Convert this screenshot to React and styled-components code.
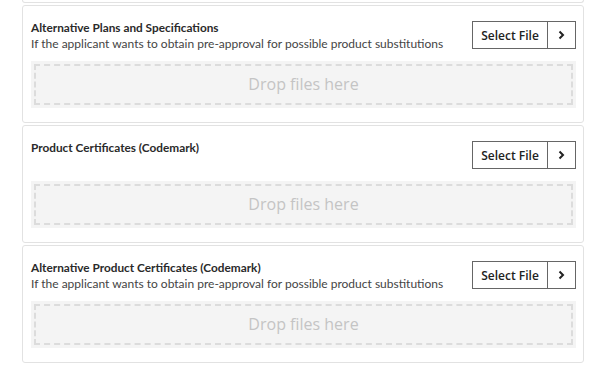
import React from 'react'
import styled, { createGlobalStyle } from 'styled-components'

const GlobalStyle = createGlobalStyle`
  body {
    margin: 0;
    background: #fff;
    font-family: 'Lato', 'Open Sans', sans-serif;
  }
`

const Page = styled.div`
  width: 562px;
  padding-left: 22px;
  display: flex;
  flex-direction: column;
  gap: 2px;
`

const CardStub = styled.div`
  height: 2px;
  border: 1px solid #e2e2e2;
  border-top: none;
  border-radius: 0 0 3px 3px;
`

const Card = styled.div`
  background: #fff;
  border: 1px solid #e2e2e2;
  border-radius: 3px;
  padding: 15px 7px 14px 8px;
  display: flex;
  flex-direction: column;
  gap: 12px;
`

const Header = styled.div`
  display: flex;
  justify-content: space-between;
  align-items: flex-start;
  height: 28px;
`

const Info = styled.div`
  display: flex;
  flex-direction: column;
  gap: 2px;
`

const Title = styled.div`
  font-size: 11.8px;
  font-weight: 700;
  color: #2a2a2a;
  line-height: 14px;
`

const Desc = styled.div`
  font-size: 12px;
  color: #444;
  line-height: 14px;
`

const ButtonGroup = styled.div`
  display: flex;
  height: 28px;
  border: 1px solid #666;
  box-sizing: border-box;
  font-family: 'Open Sans', sans-serif;
`

const SelectButton = styled.div`
  width: 74px;
  display: flex;
  align-items: center;
  justify-content: center;
  font-size: 12px;
  font-weight: 600;
  color: #222;
  border-right: 1px solid #666;
`

const ChevronButton = styled.div`
  width: 27px;
  display: flex;
  align-items: center;
  justify-content: center;
`

const DropZone = styled.div`
  height: 47px;
  background: #f4f4f4;
  padding: 3px;
  box-sizing: border-box;
`

const DropInner = styled.div`
  height: 100%;
  box-sizing: border-box;
  border: 2px dashed #dcdcdc;
  display: flex;
  align-items: center;
  justify-content: center;
  padding-bottom: 2px;
  font-family: 'Open Sans', sans-serif;
  font-size: 16px;
  color: #c4c4c4;
`

const Footer = styled.div`
  height: 20px;
`

const Chevron = () => (
  <svg width="7" height="10" viewBox="0 0 7 10">
    <path d="M1.5 1.5 L5 5 L1.5 8.5" fill="none" stroke="#222" strokeWidth="2" />
  </svg>
)

const uploads = [
  {
    title: 'Alternative Plans and Specifications',
    desc: 'If the applicant wants to obtain pre-approval for possible product substitutions',
  },
  { title: 'Product Certificates (Codemark)' },
  {
    title: 'Alternative Product Certificates (Codemark)',
    desc: 'If the applicant wants to obtain pre-approval for possible product substitutions',
  },
]

const App = () => (
  <>
    <GlobalStyle />
    <Page>
      <CardStub />
      {uploads.map(u => (
        <Card key={u.title}>
          <Header>
            <Info>
              <Title>{u.title}</Title>
              {u.desc && <Desc>{u.desc}</Desc>}
            </Info>
            <ButtonGroup>
              <SelectButton>Select File</SelectButton>
              <ChevronButton><Chevron /></ChevronButton>
            </ButtonGroup>
          </Header>
          <DropZone>
            <DropInner>Drop files here</DropInner>
          </DropZone>
        </Card>
      ))}
      <Footer />
    </Page>
  </>
)

export default App
